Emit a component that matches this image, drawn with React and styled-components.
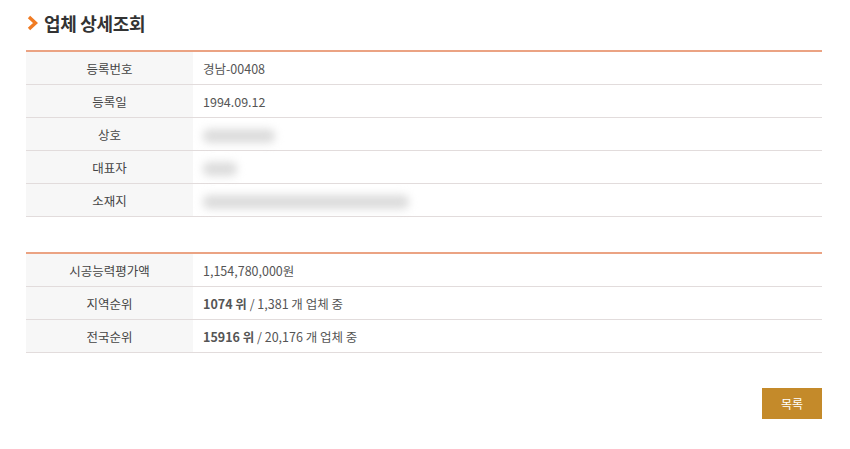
import React from 'react'
import styled, { createGlobalStyle } from 'styled-components'

const GlobalStyle = createGlobalStyle`
  body {
    margin: 0;
    background: #fff;
    font-family: 'Noto Sans CJK KR', 'Noto Sans', sans-serif;
  }
`

const basic = [
  { label: '등록번호', value: '경남-00408' },
  { label: '등록일', value: '1994.09.12' },
  { label: '상호', blur: 72 },
  { label: '대표자', blur: 34 },
  { label: '소재지', blur: 206 },
]

const App = () => (
  <Page>
    <GlobalStyle />
    <Title>
      <svg width="12" height="16" viewBox="0 0 12 16">
        <path d="M2 2 L8.5 8 L2 14" fill="none" stroke="#f07b23" strokeWidth="3.4" strokeLinejoin="miter" />
      </svg>
      업체 상세조회
    </Title>
    <Table>
      <tbody>
        {basic.map(row => (
          <tr key={row.label}>
            <Th>{row.label}</Th>
            <Td>{row.blur ? <Blurred w={row.blur} /> : row.value}</Td>
          </tr>
        ))}
      </tbody>
    </Table>
    <Table $gap>
      <tbody>
        <tr>
          <Th>시공능력평가액</Th>
          <Td>1,154,780,000원</Td>
        </tr>
        <tr>
          <Th>지역순위</Th>
          <Td><b>1074 위</b> / 1,381 개 업체 중</Td>
        </tr>
        <tr>
          <Th>전국순위</Th>
          <Td><b>15916 위</b> / 20,176 개 업체 중</Td>
        </tr>
      </tbody>
    </Table>
    <Actions>
      <ListButton>목록</ListButton>
    </Actions>
  </Page>
)

const Page = styled.div`
  width: 796px;
  padding: 10px 28px 0 26px;
`

const Title = styled.h2`
  display: flex;
  align-items: center;
  gap: 5px;
  margin: 0 0 14px 1px;
  height: 26px;
  font-size: 18px;
  font-weight: 700;
  color: #333;
  letter-spacing: -0.3px;
`

const Table = styled.table`
  width: 100%;
  border-collapse: collapse;
  border-top: 2px solid #eba383;
  margin-top: ${p => (p.$gap ? '35px' : '0')};
  font-size: 12.5px;
`

const Th = styled.th`
  width: 167px;
  height: 32px;
  padding: 0;
  background: #f7f7f7;
  border-bottom: 1px solid #e2dcdc;
  font-weight: 400;
  color: #444;
  text-align: center;
`

const Td = styled.td`
  height: 32px;
  padding: 0 0 0 10px;
  border-bottom: 1px solid #e2dcdc;
  color: #555;

  b {
    font-weight: 700;
    color: #555;
  }
`

const Blurred = styled.span`
  display: inline-block;
  vertical-align: middle;
  width: ${p => p.w}px;
  height: 14px;
  background: #dcdcdc;
  border-radius: 6px;
  filter: blur(4px);
`

const Actions = styled.div`
  display: flex;
  justify-content: flex-end;
  margin-top: 35px;
`

const ListButton = styled.button`
  width: 60px;
  height: 31px;
  border: 0;
  background: #c48a2a;
  color: #fff;
  font-family: inherit;
  font-size: 12px;
  cursor: pointer;
`

export default App
